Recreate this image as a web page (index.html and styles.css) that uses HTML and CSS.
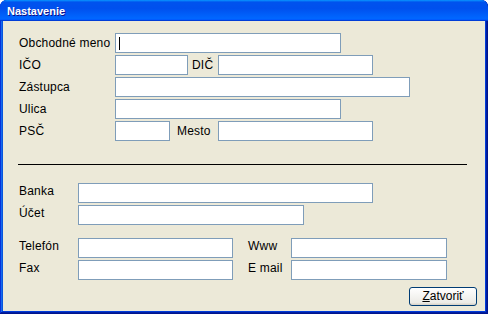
FILE: index.html
```html
<!DOCTYPE html>
<html lang="sk">
<head>
<meta charset="utf-8">
<title>Nastavenie</title>
<link rel="stylesheet" href="styles.css">
</head>
<body>
<div class="window">
  <div class="titlebar"><span class="title">Nastavenie</span></div>
  <div class="client">
    <div class="section top">
      <div class="row">
        <label class="lbl lbl-wide">Obchodné meno</label>
        <span class="caret-wrap"><input class="field w226" type="text"><span class="caret"></span></span>
      </div>
      <div class="row">
        <label class="lbl lbl-wide">IČO</label>
        <input class="field w73" type="text">
        <label class="lbl lbl-mid dic">DIČ</label>
        <input class="field w155" type="text">
      </div>
      <div class="row">
        <label class="lbl lbl-wide">Zástupca</label>
        <input class="field w295" type="text">
      </div>
      <div class="row">
        <label class="lbl lbl-wide">Ulica</label>
        <input class="field w226" type="text">
      </div>
      <div class="row">
        <label class="lbl lbl-wide">PSČ</label>
        <input class="field w55" type="text">
        <label class="lbl lbl-mid mesto">Mesto</label>
        <input class="field w155" type="text">
      </div>
    </div>
    <hr class="divider">
    <div class="section bank">
      <div class="row">
        <label class="lbl lbl-narrow">Banka</label>
        <input class="field w295" type="text">
      </div>
      <div class="row">
        <label class="lbl lbl-narrow">Účet</label>
        <input class="field w226" type="text">
      </div>
    </div>
    <div class="section contact">
      <div class="row">
        <label class="lbl lbl-narrow">Telefón</label>
        <input class="field w155" type="text">
        <label class="lbl lbl-side">Www</label>
        <input class="field w156" type="text">
      </div>
      <div class="row">
        <label class="lbl lbl-narrow">Fax</label>
        <input class="field w155" type="text">
        <label class="lbl lbl-side">E mail</label>
        <input class="field w156" type="text">
      </div>
    </div>
    <div class="actions">
      <button class="btn" type="button"><u>Z</u>atvoriť</button>
    </div>
  </div>
</div>
</body>
</html>
```
FILE: styles.css
```css
html, body {
  margin: 0;
  padding: 0;
  background: #ffffff;
}
body {
  width: 488px;
  height: 314px;
  overflow: hidden;
  font-family: "Liberation Sans", Arial, sans-serif;
  font-size: 12px;
  color: #000;
}
.window {
  width: 488px;
  height: 314px;
  box-sizing: border-box;
  background: #0831d9;
  border-radius: 7px 7px 0 0;
  display: flex;
  flex-direction: column;
  padding: 0 3px 3px 3px;
  box-shadow: inset -1px -1px #00138c, inset 1px 1px #0831d9, inset -2px -2px #001ea0, inset 2px 2px #166aee, inset -3px -3px #003bda, inset 3px 3px #0855dd;
}
.titlebar {
  height: 21px;
  margin: 0 -3px;
  border-radius: 7px 7px 0 0;
  background: linear-gradient(180deg, #0997ff 0%, #0053ee 10%, #0050ee 40%, #0066ff 85%, #0066ff 90%, #005bff 93%, #003dd7 97%, #003dd7 100%);
  display: flex;
  align-items: center;
  padding-left: 7px;
}
.title {
  color: #fff;
  font-weight: bold;
  font-size: 11px;
  text-shadow: 1px 1px #0f1089;
}
.client {
  flex: 1;
  background: #ece9d8;
  padding: 12px 8px 0 16px;
  display: flex;
  flex-direction: column;
}
.section {
  display: flex;
  flex-direction: column;
  gap: 2px;
}
.row {
  display: flex;
  align-items: center;
  height: 20px;
}
.lbl {
  display: block;
  box-sizing: border-box;
  white-space: nowrap;
  line-height: 14px;
  letter-spacing: 0.2px;
}
.lbl-wide { width: 96px; }
.lbl-narrow { width: 59px; position: relative; top: -2px; }
.dic { width: 30px; padding-left: 4px; }
.mesto { width: 48px; padding-left: 7px; }
.lbl-side { width: 58px; padding-left: 15px; position: relative; top: -2px; }
.field {
  box-sizing: border-box;
  height: 20px;
  margin: 0;
  padding: 0 3px;
  border: 1px solid #7f9db9;
  background: #fff;
  font: inherit;
  outline: none;
}
.w55 { width: 55px; }
.w73 { width: 73px; }
.w155 { width: 155px; }
.w156 { width: 156px; }
.w226 { width: 226px; }
.w295 { width: 295px; }
.caret-wrap {
  position: relative;
  display: block;
  height: 20px;
}
.caret {
  position: absolute;
  left: 4px;
  top: 4px;
  width: 1px;
  height: 13px;
  background: #000;
}
.divider {
  margin: 23px 0 0 -1px;
  width: 449px;
  height: 0;
  border: 0;
  border-top: 1px solid #000;
}
.bank { margin-top: 18px; }
.contact { margin-top: 13px; }
.actions {
  display: flex;
  justify-content: flex-end;
  margin-top: 7px;
}
.btn {
  width: 68px;
  height: 19px;
  box-sizing: border-box;
  border: 1px solid #003c74;
  border-radius: 3px;
  background: linear-gradient(180deg, #ffffff 0%, #ecebe6 86%, #d6d0c5 100%);
  font: inherit;
  color: #000;
  padding: 0;
  line-height: 15px;
}
```
